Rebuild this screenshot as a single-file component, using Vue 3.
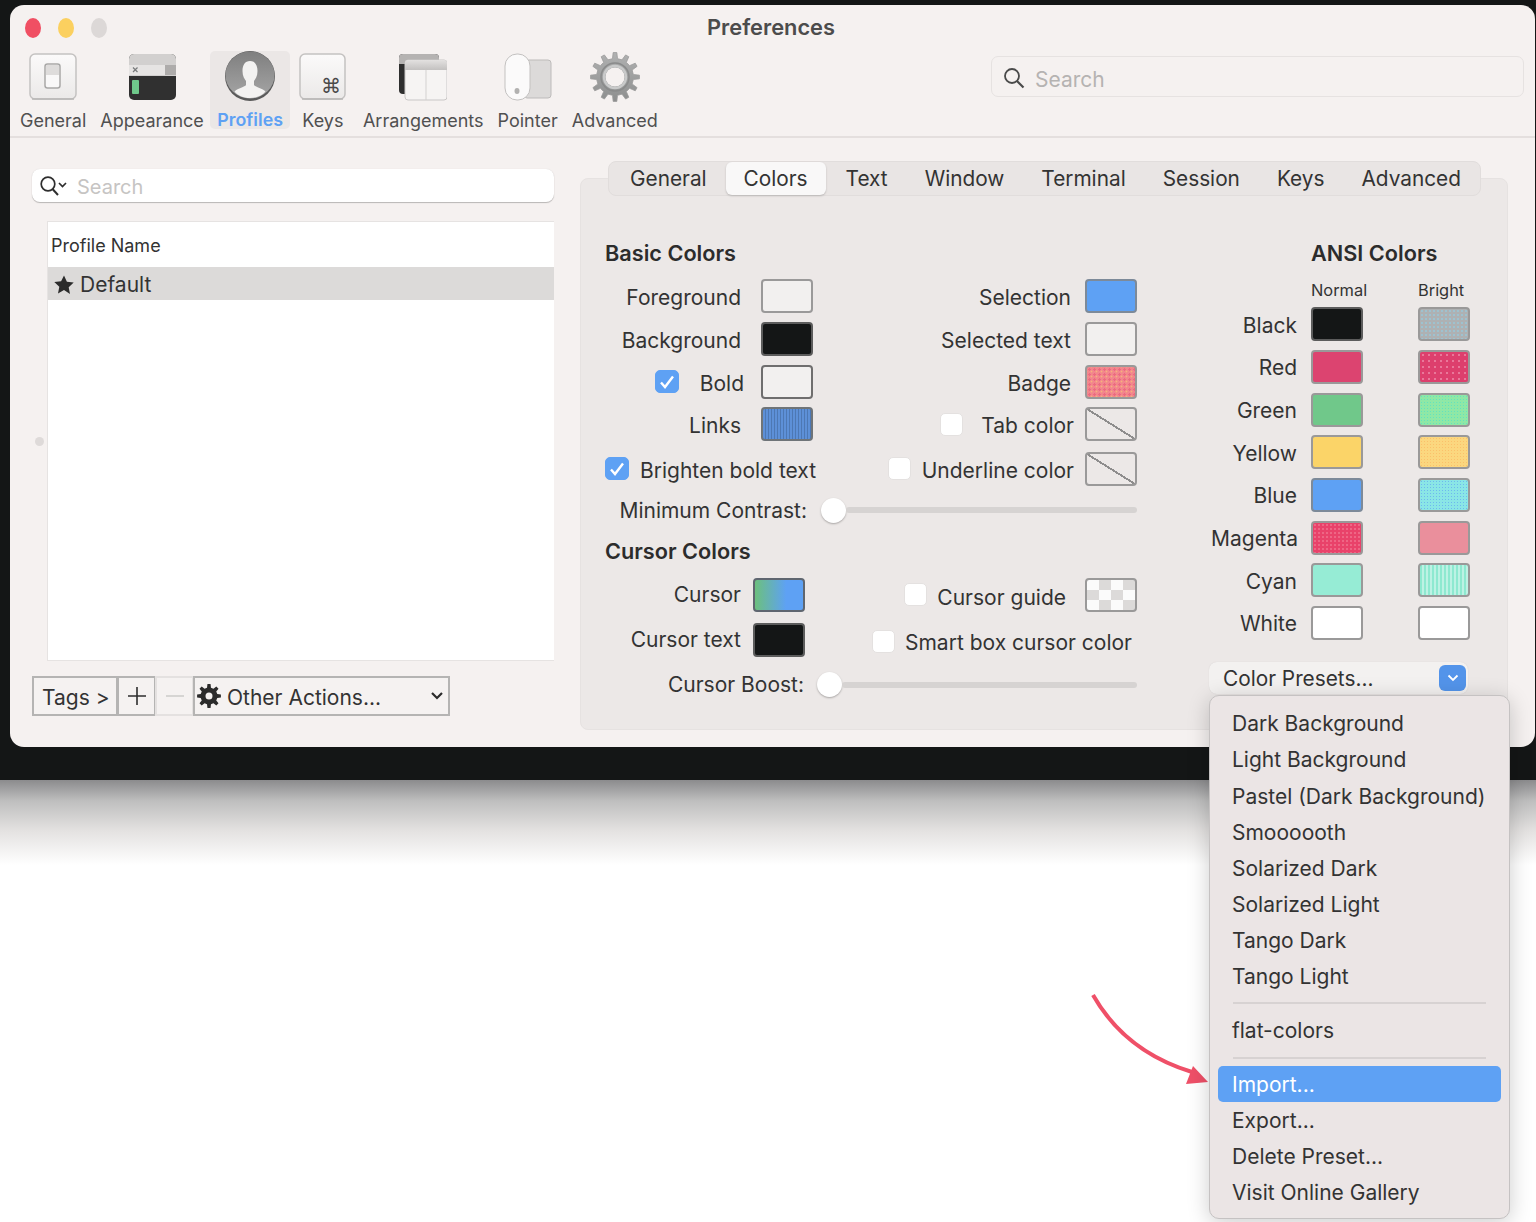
<script setup>
const tabs = ['General', 'Colors', 'Text', 'Window', 'Terminal', 'Session', 'Keys', 'Advanced']

const ansi = [
  { name: 'Black', normal: 'black', bright: 'gray-d' },
  { name: 'Red', normal: 'red', bright: 'red-d' },
  { name: 'Green', normal: 'green', bright: 'green-d' },
  { name: 'Yellow', normal: 'yellow', bright: 'yellow-d' },
  { name: 'Blue', normal: 'blue', bright: 'blue-d' },
  { name: 'Magenta', normal: 'magenta', bright: 'rose' },
  { name: 'Cyan', normal: 'cyan', bright: 'cyan-d' },
  { name: 'White', normal: 'white', bright: 'white' }
]

const presets = ['Dark Background', 'Light Background', 'Pastel (Dark Background)', 'Smoooooth', 'Solarized Dark', 'Solarized Light', 'Tango Dark', 'Tango Light']
const actions = ['Export...', 'Delete Preset...', 'Visit Online Gallery']

// toothed outline with a round hole, used for both gears
function gear(cx, cy, outer, inner, hole, teeth, w) {
  let d = ''
  const step = (Math.PI * 2) / teeth
  const pt = (r, a) => `${(cx + r * Math.cos(a)).toFixed(2)} ${(cy + r * Math.sin(a)).toFixed(2)}`
  for (let i = 0; i < teeth; i++) {
    const a = i * step
    d += `${i ? 'L' : 'M'}${pt(inner, a - step * w)} L${pt(outer, a - step * w * 0.55)} L${pt(outer, a + step * w * 0.55)} L${pt(inner, a + step * w)} `
  }
  d += `Z M${cx - hole} ${cy} A${hole} ${hole} 0 1 0 ${cx + hole} ${cy} A${hole} ${hole} 0 1 0 ${cx - hole} ${cy} Z`
  return d
}
const bigGear = gear(25, 25, 24.5, 18.5, 10, 12, 0.26)
const smallGear = gear(12, 12, 12, 8.5, 3.5, 8, 0.3)
</script>

<template>
  <div class="page">
    <div class="desktop">
      <div class="window">
        <div class="titlebar">
          <div class="lights">
            <span class="light red-l"></span>
            <span class="light yellow-l"></span>
            <span class="light gray-l"></span>
          </div>
          <div class="title">Preferences</div>
        </div>

        <div class="toolbar">
          <div class="tools">
            <div class="tool">
              <svg class="ticon" width="48" height="48" viewBox="0 0 48 48">
                <defs>
                  <linearGradient id="capFill" x1="0" y1="0" x2="0" y2="1">
                    <stop offset="0" stop-color="#fbfafa" />
                    <stop offset="1" stop-color="#ebe9e8" />
                  </linearGradient>
                </defs>
                <rect x="1" y="1" width="46" height="45" rx="5" fill="url(#capFill)" stroke="#c4c2c1" stroke-width="1.5" />
                <path d="M3 46h42" stroke="#b9b7b6" stroke-width="1.5" />
                <rect x="16" y="11" width="15" height="24" rx="2.5" fill="#f9f8f8" stroke="#a9a8a7" stroke-width="1.5" />
                <rect x="17" y="12" width="13" height="10" fill="#dedcdb" />
              </svg>
              <span>General</span>
            </div>
            <div class="tool">
              <svg class="ticon" width="47" height="48" viewBox="0 0 47 48">
                <rect x="0" y="1" width="47" height="46" rx="5" fill="#303030" />
                <path d="M0 23V6a5 5 0 0 1 5-5h37a5 5 0 0 1 5 5v17z" fill="#d2d0cf" />
                <rect x="0" y="12" width="36" height="10" fill="#e6e4e3" />
                <rect x="36" y="12" width="11" height="10" fill="#aeacab" />
                <path d="M4 14.5l4.5 4.5M8.5 14.5L4 19" stroke="#77797a" stroke-width="1.2" />
                <rect x="3" y="27" width="7" height="14" rx="1" fill="#6fc98b" />
              </svg>
              <span>Appearance</span>
            </div>
            <div class="tool active">
              <svg class="ticon" width="50" height="50" viewBox="0 0 50 50">
                <defs>
                  <linearGradient id="faceFill" x1="0" y1="0" x2="0" y2="1">
                    <stop offset="0" stop-color="#7f7f7f" />
                    <stop offset="1" stop-color="#a6a6a6" />
                  </linearGradient>
                </defs>
                <circle cx="25" cy="25" r="25" fill="#5a5a5a" />
                <ellipse cx="25" cy="24" rx="24.5" ry="23.5" fill="url(#faceFill)" />
                <path d="M25 10c5 0 7.5 4 7.5 10 0 5-2 8-3.5 10v4c1 2 8 3 11.5 6.5-3 4-9 6.5-15.5 6.5s-12.5-2.5-15.500-6.500c3.500-3.500 10.500-4.500 11.500-6.500v-4c-1.500-2-3.500-5-3.500-10 0-6 2.500-10 7.500-10z" fill="#f3f2f1" />
              </svg>
              <span>Profiles</span>
            </div>
            <div class="tool keys">
              <svg class="ticon" width="47" height="48" viewBox="0 0 47 48">
                <defs>
                  <linearGradient id="keyFill" x1="0" y1="0" x2="0" y2="1">
                    <stop offset="0" stop-color="#fbfafa" />
                    <stop offset="1" stop-color="#ebe9e8" />
                  </linearGradient>
                </defs>
                <rect x="1" y="1" width="45" height="45" rx="5" fill="url(#keyFill)" stroke="#c4c2c1" stroke-width="1.5" />
                <path d="M3 46h41" stroke="#b9b7b6" stroke-width="1.5" />
                <text x="32" y="40" text-anchor="middle" class="cmd">⌘</text>
              </svg>
              <span>Keys</span>
            </div>
            <div class="tool">
              <svg class="ticon" width="48" height="48" viewBox="0 0 48 48">
                <defs>
                  <linearGradient id="barFill" x1="0" y1="0" x2="0" y2="1">
                    <stop offset="0" stop-color="#e3e1e0" />
                    <stop offset="1" stop-color="#c3c1c0" />
                  </linearGradient>
                </defs>
                <rect x="0" y="1" width="40" height="40" rx="4" fill="#2e2e2e" />
                <path d="M0 11V5a4 4 0 0 1 4-4h32a4 4 0 0 1 4 4v6z" fill="#b5b3b2" />
                <rect x="6" y="7" width="42" height="40" rx="3" fill="#f6f4f3" stroke="#c9c7c6" />
                <path d="M6 17v-7a3 3 0 0 1 3-3h36a3 3 0 0 1 3 3v7z" fill="url(#barFill)" />
                <path d="M27 17v30" stroke="#d3d1d0" />
              </svg>
              <span>Arrangements</span>
            </div>
            <div class="tool">
              <svg class="ticon" width="48" height="48" viewBox="0 0 48 48">
                <rect x="20" y="7" width="27" height="38" rx="3" fill="#dcdad9" stroke="#bdbbba" />
                <rect x="1" y="1" width="25" height="46" rx="12" fill="#fbfafa" stroke="#c3c1c0" />
                <ellipse cx="13" cy="38" rx="2.500" ry="3" fill="#b2b1b0" />
              </svg>
              <span>Pointer</span>
            </div>
            <div class="tool">
              <svg class="ticon" width="50" height="50" viewBox="0 0 50 50">
                <defs>
                  <linearGradient id="gearFill" x1="0" y1="0" x2="0" y2="1">
                    <stop offset="0" stop-color="#b0b1b1" />
                    <stop offset="1" stop-color="#8d8e8e" />
                  </linearGradient>
                </defs>
                <path :d="bigGear" fill="url(#gearFill)" fill-rule="evenodd" stroke="#9a9b9b" stroke-width="0.8" stroke-linejoin="round" />
                <circle cx="25" cy="25" r="14" fill="none" stroke="#8a8b8b" stroke-width="1.500" />
                <circle cx="25" cy="25" r="11" fill="none" stroke="#c9caca" stroke-width="2.500" />
              </svg>
              <span>Advanced</span>
            </div>
          </div>

          <div class="top-search">
            <svg class="glass" width="22" height="22" viewBox="0 0 22 22">
              <circle cx="9" cy="9" r="7" fill="none" stroke="#4a4a4a" stroke-width="1.8" />
              <path d="M14 14l6.500 6.500" stroke="#4a4a4a" stroke-width="2.200" />
            </svg>
            <span>Search</span>
          </div>
        </div>

        <div class="body">
          <div class="left">
            <div class="search">
              <svg width="30" height="24" viewBox="0 0 30 24">
                <circle cx="9" cy="10" r="6.800" fill="none" stroke="#2e2e2e" stroke-width="1.700" />
                <path d="M13.500 15l5.500 6" stroke="#2e2e2e" stroke-width="2" />
                <path d="M20 9l3.500 3.500L27 9" fill="none" stroke="#2e2e2e" stroke-width="1.700" />
              </svg>
              <span>Search</span>
            </div>

            <div class="list-wrap">
              <div class="grip"><span class="dot"></span></div>
              <div class="list">
                <div class="list-head">Profile Name</div>
                <div class="list-row">
                  <svg width="20" height="20" viewBox="0 0 20 20">
                    <path d="M10 0.500l2.900 6.300 6.800.8-5 4.700 1.300 6.800L10 15l-6 3.600 1.300-6.800-5-4.700 6.800-.8z" fill="#2b2b2b" />
                  </svg>
                  <span>Default</span>
                </div>
              </div>
            </div>

            <div class="actions">
              <div class="act act-tags"><span>Tags &gt;</span></div>
              <div class="act act-plus">
                <svg width="18" height="18" viewBox="0 0 18 18"><path d="M9 0v18M0 9h18" stroke="#2e2e2e" stroke-width="1.600" /></svg>
              </div>
              <div class="act act-minus">
                <svg width="18" height="18" viewBox="0 0 18 18"><path d="M0 9h18" stroke="#cfcdcc" stroke-width="1.600" /></svg>
              </div>
              <div class="act act-other">
                <svg width="24" height="24" viewBox="0 0 24 24"><path :d="smallGear" fill="#2b2b2b" fill-rule="evenodd" /></svg>
                <span>Other Actions...</span>
                <svg class="act-chev" width="14" height="10" viewBox="0 0 14 10"><path d="M2 2l5 5 5-5" fill="none" stroke="#2b2b2b" stroke-width="2.200" /></svg>
              </div>
            </div>
          </div>

          <div class="panel">
            <div class="tabs">
              <template v-for="(t, i) in tabs" :key="t">
                <div class="tab" :class="{ on: t === 'Colors' }">{{ t }}</div>
                <span v-if="i > 1 && i < tabs.length - 1" class="tab-sep"></span>
              </template>
            </div>

            <div class="columns">
              <div class="basic">
                <h3>Basic Colors</h3>
                <div class="grid-basic">
                  <div class="row"><span class="g20">Foreground</span><i class="sw off"></i></div>
                  <div class="row"><span class="g14">Selection</span><i class="sw blue"></i></div>

                  <div class="row"><span class="g20">Background</span><i class="sw black"></i></div>
                  <div class="row"><span class="g14">Selected text</span><i class="sw off"></i></div>

                  <div class="row">
                    <b class="check on g21"><svg width="16" height="14" viewBox="0 0 16 14"><path d="M2 7.500l4 4.500 8-10.500" fill="none" stroke="#fff" stroke-width="2.400" /></svg></b>
                    <span class="g17">Bold</span><i class="sw off dark-edge"></i>
                  </div>
                  <div class="row"><span class="g14">Badge</span><i class="sw badge"></i></div>

                  <div class="row"><span class="g20">Links</span><i class="sw links"></i></div>
                  <div class="row">
                    <b class="check g18"></b><span class="g11">Tab color</span><i class="sw none"></i>
                  </div>

                  <div class="row row-tall row-start">
                    <b class="check on g11"><svg width="16" height="14" viewBox="0 0 16 14"><path d="M2 7.500l4 4.500 8-10.500" fill="none" stroke="#fff" stroke-width="2.400" /></svg></b>
                    <span>Brighten bold text</span>
                  </div>
                  <div class="row row-tall">
                    <b class="check g11"></b><span class="g11">Underline color</span><i class="sw none"></i>
                  </div>
                </div>

                <div class="slider slider-min">
                  <span class="slider-label">Minimum Contrast:</span>
                  <span class="knob"></span>
                  <span class="track"></span>
                </div>

                <h3 class="h-cursor">Cursor Colors</h3>
                <div class="grid-cursor">
                  <div class="row"><span class="g12 flat">Cursor</span><i class="sw cursor"></i></div>
                  <div class="row row-guide">
                    <b class="check g10"></b><span class="g19">Cursor guide</span><i class="sw guide"></i>
                  </div>

                  <div class="row"><span class="g12 flat">Cursor text</span><i class="sw black"></i></div>
                  <div class="row row-smart">
                    <b class="check g10"></b><span>Smart box cursor color</span>
                  </div>

                  <div class="slider slider-boost">
                    <span class="slider-label">Cursor Boost:</span>
                    <span class="knob"></span>
                    <span class="track"></span>
                  </div>
                </div>
              </div>

              <div class="ansi">
                <h3>ANSI Colors</h3>
                <div class="ansi-head"><span>Normal</span><span>Bright</span></div>
                <div class="grid-ansi">
                  <template v-for="c in ansi" :key="c.name">
                    <span class="ansi-name">{{ c.name }}</span>
                    <i class="sw" :class="c.normal"></i>
                    <i class="sw" :class="c.bright"></i>
                  </template>
                </div>

                <div class="presets">
                  <span>Color Presets...</span>
                  <b class="presets-btn">
                    <svg width="12" height="8" viewBox="0 0 12 8"><path d="M1.500 1.500L6 6l4.500-4.500" fill="none" stroke="#fff" stroke-width="1.800" /></svg>
                  </b>
                  <div class="menu">
                    <div v-for="p in presets" :key="p" class="item">{{ p }}</div>
                    <div class="sep"></div>
                    <div class="item">flat-colors</div>
                    <div class="sep sep-last"></div>
                    <div class="item hover">Import...</div>
                    <div v-for="a in actions" :key="a" class="item">{{ a }}</div>
                  </div>
                </div>
              </div>
            </div>
          </div>
        </div>
      </div>
    </div>
    <div class="drop"></div>

    <svg class="arrow" width="124" height="98" viewBox="0 0 124 98">
      <path d="M3 3C24 40 56 66 102 80" fill="none" stroke="#ef5068" stroke-width="4" />
      <path d="M118 90L96 92 103 74z" fill="#ef5068" />
    </svg>
  </div>
</template>

<style>
html,
body {
  margin: 0;
  background: #fff;
}
</style>

<style scoped>
.page {
  position: relative;
  width: 1536px;
  height: 1222px;
  overflow: hidden;
  background: #fff;
  font-family: Inter, 'Liberation Sans', sans-serif;
  font-size: 21px;
  color: #333;
}
.desktop {
  height: 780px;
  box-sizing: border-box;
  padding: 5px 1px 0 10px;
  background: #141616;
}
.drop {
  height: 85px;
  background: linear-gradient(#8b8b8d, #bfbfbf 25%, #e4e2e1 60%, #fff);
}
.window {
  height: 742px;
  border-radius: 14px;
  background: #f5f1f0;
}

.titlebar {
  position: relative;
  height: 45px;
  display: flex;
  align-items: center;
  justify-content: center;
}
.title {
  font-size: 21.8px;
  font-weight: 600;
  color: #4c4c4c;
  margin: 0 3px 2px 0;
}
.lights {
  position: absolute;
  left: 15px;
  top: 13px;
  display: flex;
  gap: 17px;
}
.light {
  width: 16px;
  height: 20px;
  border-radius: 50%;
}
.red-l {
  background: #f04f63;
}
.yellow-l {
  background: #fbd05f;
}
.gray-l {
  background: #dcd8d7;
}

.toolbar {
  position: relative;
  height: 88px;
  box-sizing: border-box;
  padding-left: 10px;
  border-bottom: 2px solid #e4dfde;
}
.tools {
  display: flex;
  gap: 14px;
}
.tool {
  display: flex;
  flex-direction: column;
  align-items: center;
  font-size: 18px;
  color: #505050;
  height: 78px;
  line-height: 22px;
  white-space: nowrap;
}
.ticon {
  height: 50px;
  margin-top: 1px;
  margin-bottom: 8px;
  flex: none;
}
.tool.active {
  padding: 0 7px;
  margin: 1px -4.5px 0 -7.5px;
  height: 78px;
  border-radius: 5px;
  background: #ebe7e6;
  color: #5ea1f4;
  font-size: 17.8px;
  font-weight: 600;
}
.tool.active .ticon {
  margin-top: 0;
}
.tool.keys {
  margin-right: 2.5px;
}
.tool:not(.active) .ticon {
  padding-top: 1px;
}
.cmd {
  font-family: 'DejaVu Sans', sans-serif;
  font-size: 20px;
  fill: #4a4a4a;
}
.top-search {
  position: absolute;
  left: 981px;
  top: 6px;
  width: 533px;
  height: 41px;
  box-sizing: border-box;
  border: 1px solid #e6e2e1;
  border-radius: 7px;
  display: flex;
  align-items: center;
  padding-left: 11px;
  gap: 10px;
  font-size: 21px;
  color: #b5b3b2;
}
.top-search span {
  padding-top: 5px;
}
.glass {
  margin-top: 2px;
}

.body {
  display: flex;
  gap: 26px;
  padding-left: 22px;
}
.left {
  width: 522px;
  padding-top: 31px;
}
.search {
  height: 33px;
  box-sizing: border-box;
  border-radius: 8px;
  background: #fff;
  box-shadow: 0 1px 1px #b9b6b5, 0 0 1px #d9d5d4;
  display: flex;
  align-items: center;
  padding-left: 7px;
  gap: 8px;
  font-size: 20px;
  color: #c6c4c3;
}
.search span {
  padding-top: 2px;
}
.list-wrap {
  display: flex;
  margin-top: 19px;
}
.grip {
  width: 15px;
  display: flex;
  align-items: center;
  justify-content: center;
}
.dot {
  width: 9px;
  height: 9px;
  border-radius: 50%;
  background: #dedad9;
}
.list {
  flex: 1;
  height: 440px;
  box-sizing: border-box;
  background: #fff;
  border: 1px solid #e6e3e2;
  border-right: 0;
}
.list-head {
  height: 45px;
  box-sizing: border-box;
  padding: 2px 0 0 3px;
  display: flex;
  align-items: center;
  font-size: 18px;
}
.list-row {
  height: 33px;
  box-sizing: border-box;
  padding: 2px 0 0 6px;
  background: #dcdad9;
  display: flex;
  align-items: center;
  gap: 6px;
  font-size: 21px;
}
.actions {
  display: flex;
  margin-top: 15px;
  height: 40px;
}
.act {
  box-sizing: border-box;
  display: flex;
  align-items: center;
  border: 2px solid #b5b4b3;
  margin-left: -1px;
  font-size: 21px;
  background: #f5f2f1;
}
.act span {
  padding-top: 2px;
}
.act-tags {
  width: 86px;
  margin-left: 0;
  padding-left: 8px;
}
.act-plus,
.act-minus {
  width: 39px;
  justify-content: center;
}
.act-minus {
  border-color: #e4e1e0;
}
.act-other {
  width: 257px;
  padding-left: 2px;
  gap: 6px;
}
.act-chev {
  margin-left: auto;
  margin-right: 4px;
}

.panel {
  width: 928px;
  height: 552px;
  box-sizing: border-box;
  margin-top: 40px;
  background: #ece8e7;
  border: 1px solid #e6e2e1;
  border-radius: 8px;
}
.tabs {
  display: flex;
  align-items: center;
  height: 35px;
  box-sizing: border-box;
  width: 873px;
  margin: -18px 0 0 27px;
  padding-left: 2px;
  background: #e9e5e4;
  border: 1px solid #e1dddc;
  border-radius: 8px;
  font-size: 20.8px;
}
.tab {
  padding: 0 19px;
  line-height: 33px;
  white-space: nowrap;
}
.tab.on {
  padding: 0 18px;
  margin-right: 1px;
  background: #f9f8f8;
  border-radius: 6px;
  box-shadow: 0 1px 2px #b9b6b5;
  height: 33px;
}
.tab-sep {
  width: 1px;
  height: 19px;
  margin-right: -1px;
  background: #cbc7c6;
}
.columns {
  display: flex;
  gap: 74px;
  padding: 45px 0 0 24px;
}
h3 {
  margin: 0;
  font-size: 21.7px;
  font-weight: 600;
  line-height: 24px;
  color: #2c2c2c;
}
.basic {
  width: 532px;
}
.grid-basic {
  display: grid;
  grid-template-columns: 208px 324px;
  grid-auto-rows: 42.67px;
  margin-top: 10px;
}
.grid-cursor {
  display: grid;
  grid-template-columns: 200px 332px;
  grid-auto-rows: 45px;
  margin-top: 9px;
}
.row {
  display: flex;
  align-items: center;
  justify-content: flex-end;
  white-space: nowrap;
}
.row span {
  padding-top: 3px;
}
.row span.flat {
  padding-top: 0;
}
.row-tall {
  height: 44px;
  margin-top: 1px;
}
.row-start {
  justify-content: flex-start;
}
.row-guide span {
  padding-top: 6px;
}
.row-smart {
  padding: 4px 5px 0 0;
}
.row-smart span {
  padding-top: 2px;
}
.g10 {
  margin-right: 10px;
}
.g11 {
  margin-right: 11px;
}
.g12 {
  margin-right: 12px;
}
.g14 {
  margin-right: 14px;
}
.g17 {
  margin-right: 17px;
}
.g18 {
  margin-right: 18px;
}
.g19 {
  margin-right: 19px;
}
.g20 {
  margin-right: 20px;
}
.g21 {
  margin-right: 21px;
}
.sw {
  flex: none;
  display: block;
  width: 52px;
  height: 34px;
  box-sizing: border-box;
  border: 2px solid #9a9999;
  border-radius: 4px;
}
.off {
  background: #f2f0ef;
}
.dark-edge {
  border-color: #6f6e6e;
}
.black {
  background: #141616;
  border-color: #5c5c5c;
}
.white {
  background: #fff;
}
.red {
  background: #dc4470;
}
.green {
  background: #70c88a;
}
.yellow {
  background: #fbd468;
}
.blue {
  background: #5ea1f4;
  border-color: #7d8a99;
}
.magenta {
  background: radial-gradient(#ee6685 30%, transparent 35%) 0 0 / 4px 4px, #e9426a;
}
.cyan {
  background: #96ecd5;
}
.rose {
  background: #ea8f9c;
}
.gray-d {
  background: radial-gradient(#9ec2cf 30%, transparent 35%) 0 0 / 4px 4px, #aeb1b3;
}
.red-d {
  background: radial-gradient(#e9789a 25%, transparent 30%) 0 0 / 6px 6px, #dd3f6d;
}
.green-d {
  background: radial-gradient(#62e3c0 35%, transparent 40%) 0 0 / 3px 3px, #8fe8a6;
}
.yellow-d {
  background: radial-gradient(#fbc06a 30%, transparent 35%) 0 0 / 3px 3px, #fbd77f;
}
.blue-d {
  background: radial-gradient(#6db8ef 30%, transparent 35%) 0 0 / 3px 3px, #8ae6e6;
}
.cyan-d {
  background: repeating-linear-gradient(90deg, #8ee9d0 0 2px, #bdf2e4 2px 4px);
}
.badge {
  background: radial-gradient(#ec6a80 30%, transparent 35%) 0 0 / 5px 5px, radial-gradient(#f7b27c 25%, transparent 30%) 2px 2px / 5px 5px, #f2868c;
}
.links {
  background: repeating-linear-gradient(90deg, #5d90d8 0 2px, #4d78b4 2px 3px);
  border-color: #6f7478;
}
.cursor {
  background: linear-gradient(90deg, #6cc07e, #5ea1f4 65%);
  border-color: #5f6670;
}
.guide {
  background: repeating-conic-gradient(#dcdad9 0 25%, #fbfbfb 0 50%) 0 0 / 24px 20px;
}
.none {
  background-image: linear-gradient(to bottom left, transparent calc(50% - 1px), #8e8d8d calc(50% - 1px), #8e8d8d calc(50% + 1px), transparent calc(50% + 1px));
}
.check {
  flex: none;
  width: 23px;
  height: 23px;
  box-sizing: border-box;
  border-radius: 5px;
  background: #fff;
  border: 1px solid #e4e1e0;
  display: flex;
  align-items: center;
  justify-content: center;
}
.check.on {
  width: 24px;
  background: #5ea1f4;
  border-color: #5ea1f4;
}
.slider {
  display: flex;
  align-items: center;
  white-space: nowrap;
}
.slider-min {
  height: 38px;
  margin-top: 3px;
}
.slider-min .slider-label {
  width: 202px;
  margin-right: 14px;
  text-align: right;
}
.slider-boost {
  grid-column: 1 / 3;
}
.slider-boost .slider-label {
  width: 199px;
  margin-right: 13px;
  text-align: right;
}
.knob {
  flex: none;
  width: 25px;
  height: 25px;
  border-radius: 50%;
  background: #fff;
  box-shadow: 0 1px 2px #a9a6a5;
}
.track {
  flex: 1;
  height: 6px;
  border-radius: 3px;
  background: #d6d3d2;
}
.h-cursor {
  margin-top: 10px;
}

.ansi {
  width: 259px;
}
.ansi h3 {
  padding-left: 100px;
}
.ansi-head {
  display: flex;
  margin: 16px 0 4px 100px;
  height: 18px;
  line-height: 18px;
  font-size: 16.4px;
}
.ansi-head span {
  flex: none;
  width: 107px;
}
.grid-ansi {
  display: grid;
  grid-template-columns: 86px 52px 52px;
  column-gap: 14px;
  grid-auto-rows: 42.67px;
  align-items: center;
}
.grid-ansi .sw:nth-child(3n) {
  margin-left: 41px;
}
.ansi-name {
  text-align: right;
  padding-top: 2px;
}
.presets {
  position: relative;
  width: 259px;
  height: 32px;
  margin: 18px 0 0 -2px;
  box-sizing: border-box;
  border-radius: 8px;
  background: #f3f1f0;
  box-shadow: 0 0 1px #cfcccb;
  display: flex;
  align-items: center;
  padding-left: 14px;
  font-size: 20.8px;
}
.presets-btn {
  position: absolute;
  right: 2px;
  top: 3px;
  width: 27px;
  height: 26px;
  border-radius: 6px;
  background: #5394ea;
  display: flex;
  align-items: center;
  justify-content: center;
}
.menu {
  position: absolute;
  z-index: 2;
  left: 0;
  top: 33px;
  width: 301px;
  height: 524px;
  box-sizing: border-box;
  padding: 9px 8px;
  font-size: 21px;
  background: #ebe5e5;
  border: 1px solid #c5c2c2;
  border-radius: 10px;
  box-shadow: 0 4px 22px rgba(0, 0, 0, 0.2);
}
.item {
  height: 36.15px;
  line-height: 38px;
  padding-left: 14px;
  border-radius: 5px;
  white-space: nowrap;
}
.item.hover {
  background: #5ea1f4;
  color: #fff;
  line-height: 37px;
}
.sep {
  height: 2px;
  margin: 8px 15px;
  background: #d7d2d2;
}
.sep-last {
  margin-bottom: 7px;
}
.arrow {
  position: absolute;
  left: 1090px;
  top: 992px;
}
</style>
